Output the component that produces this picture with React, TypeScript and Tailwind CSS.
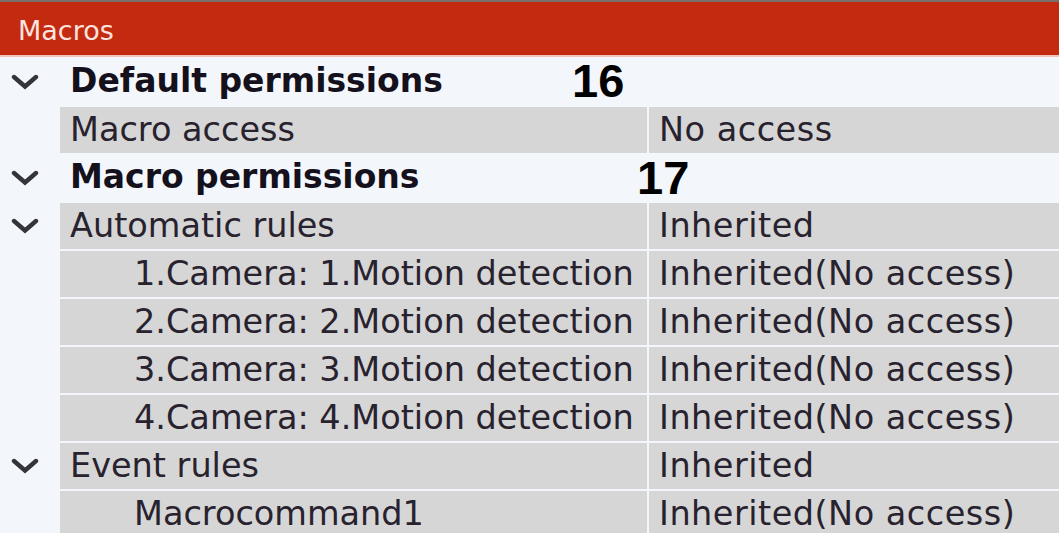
import React from 'react';

type Row = {
  label: string;
  value?: string;
  bold?: boolean;
  chevron?: boolean;
  indent?: boolean;
};

const rows: Row[] = [
  { label: 'Default permissions', bold: true, chevron: true },
  { label: 'Macro access', value: 'No access' },
  { label: 'Macro permissions', bold: true, chevron: true },
  { label: 'Automatic rules', value: 'Inherited', chevron: true },
  { label: '1.Camera: 1.Motion detection', value: 'Inherited(No access)', indent: true },
  { label: '2.Camera: 2.Motion detection', value: 'Inherited(No access)', indent: true },
  { label: '3.Camera: 3.Motion detection', value: 'Inherited(No access)', indent: true },
  { label: '4.Camera: 4.Motion detection', value: 'Inherited(No access)', indent: true },
  { label: 'Event rules', value: 'Inherited', chevron: true },
  { label: 'Macrocommand1', value: 'Inherited(No access)', indent: true },
];

const Chevron = () => (
  <svg width="28" height="16" viewBox="0 0 28 16" className="shrink-0">
    <path d="M3 3 L14 12.5 L25 3" fill="none" stroke="#35343c" strokeWidth="4.4" strokeLinecap="round" strokeLinejoin="miter" />
  </svg>
);

const App = () => {
  return (
    <div className="relative w-[1059px] h-[533px] overflow-hidden bg-[#f3f6fa] font-['DejaVu_Sans',sans-serif] text-[33.5px] text-[#28222e]">
      <div className="h-[57px] border-t-2 border-[#7a6f6c] bg-[#c32a10] border-b-2 border-b-[#eec3b8] flex items-center pl-[18px] pt-[3px]">
        <span className="text-[27px] text-[#fbe3de] leading-none">Macros</span>
      </div>

      {rows.map((row, i) =>
        row.bold ? (
          <div key={i} className="h-[48px] flex items-center">
            <div className="w-[60px] flex items-center pl-[11px] pt-[2px]">
              <Chevron />
            </div>
            <span className="pl-[10px] font-bold text-[33px] text-[#14101c]">{row.label}</span>
          </div>
        ) : (
          <div key={i} className="h-[48px] flex pt-[2px]">
            <div className="w-[60px] flex items-center pl-[11px]">
              {row.chevron && <Chevron />}
            </div>
            <div className="flex flex-1 bg-[#d6d6d6]">
              <div className={`w-[587px] flex items-center whitespace-nowrap ${row.indent ? 'pl-[74px]' : 'pl-[10px]'}`}>
                {row.label}
              </div>
              <div className="w-[2px] bg-[#f3f6fa]" />
              <div className="flex-1 flex items-center pl-[10px] whitespace-nowrap tracking-[0.5px]">{row.value}</div>
            </div>
          </div>
        )
      )}

      <span className="absolute left-[572px] top-[57px] font-['Liberation_Sans',Arial,sans-serif] font-bold text-[47px] leading-none text-black">
        16
      </span>
      <span className="absolute left-[637px] top-[154px] font-['Liberation_Sans',Arial,sans-serif] font-bold text-[47px] leading-none text-black">
        17
      </span>
    </div>
  );
};

export default App;
